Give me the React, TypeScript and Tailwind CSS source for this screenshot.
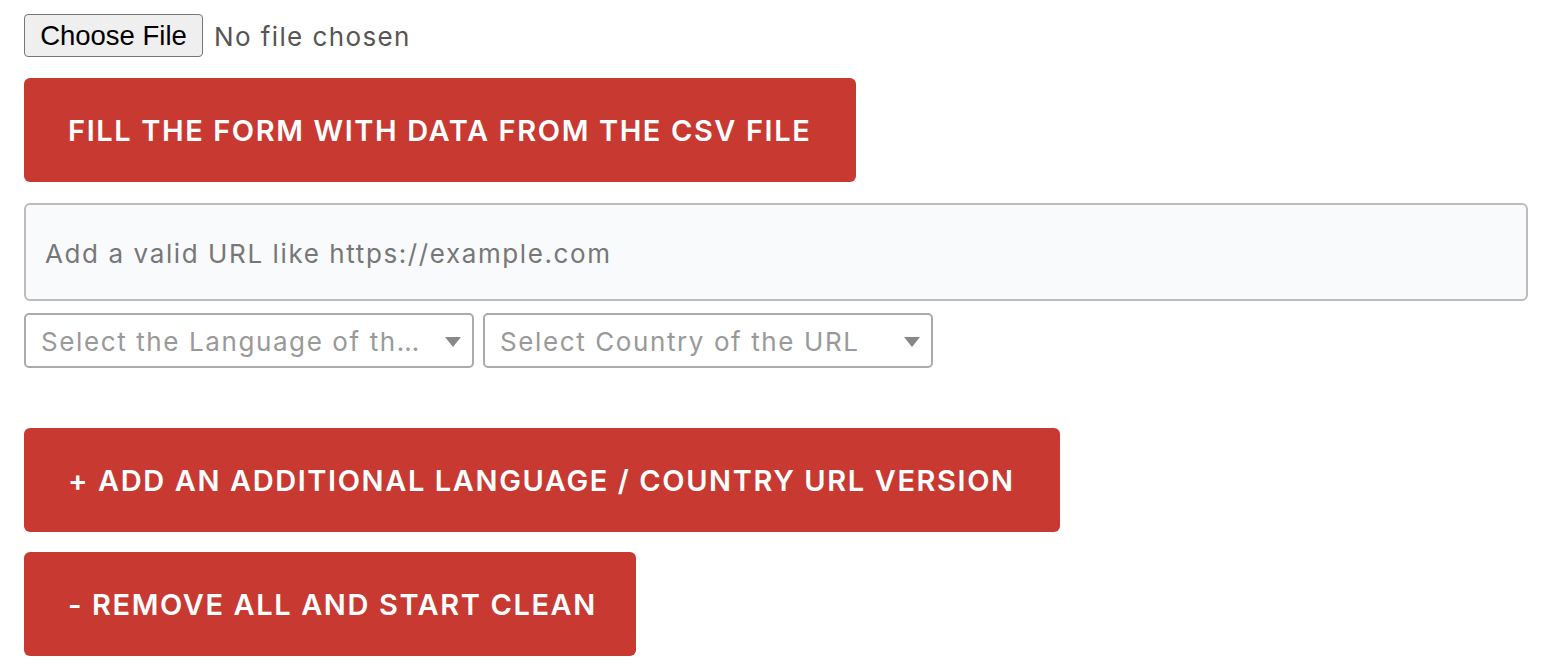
import { ChangeEvent, useState } from 'react';

const redBtn =
    'flex items-center h-[104px] pl-[44px] pr-[44px] pt-[2px] rounded-[6px] bg-[#c83932] text-white text-[29px] font-semibold tracking-[1.6px] whitespace-nowrap';

const selectBox =
    'flex items-center justify-between w-[450px] h-[55px] pl-[15px] pr-[11px] pt-[2px] border-2 border-[#ababab] rounded-[5px] text-[26px] text-[#999] tracking-[1.6px]';

function Arrow() {
    return (
        <svg width="16" height="10" viewBox="0 0 16 10" className="shrink-0 ml-[10px]">
            <path d="M0 0h16L8 10z" fill="#888" />
        </svg>
    );
}

export default function App() {
    const [url, setUrl] = useState('');

    return (
        <div className="pl-[24px] pt-[14px] font-['Inter',sans-serif] bg-white min-h-[670px]">
            <div className="flex items-center gap-[11px] h-[43px]">
                <button className="h-[43px] w-[179px] border border-[#767676] rounded-[4px] bg-[#efefef] text-[27.5px] text-black font-['Liberation_Sans',sans-serif]">
                    Choose File
                </button>
                <span className="text-[26px] text-[#555] tracking-[1.4px] pt-[2px]">No file chosen</span>
            </div>

            <button className={`${redBtn} mt-[21px] w-[832px]`}>FILL THE FORM WITH DATA FROM THE CSV FILE</button>

            <input
                value={url}
                onChange={(e: ChangeEvent<HTMLInputElement>) => setUrl(e.target.value)}
                placeholder="Add a valid URL like https://example.com"
                className="block mt-[21px] w-[1504px] h-[98px] px-[19px] pt-[2px] bg-[#f9fafc] border-2 border-[#bcbcbf] rounded-[6px] text-[26px] tracking-[1.6px] text-[#333] placeholder:text-[#777] outline-none"
            />

            <div className="flex gap-[9px] mt-[12px]">
                <div className={selectBox}>
                    <span className="whitespace-nowrap">Select the Language of th…</span>
                    <Arrow />
                </div>
                <div className={selectBox}>
                    <span className="whitespace-nowrap">Select Country of the URL</span>
                    <Arrow />
                </div>
            </div>

            <button className={`${redBtn} mt-[60px] w-[1036px]`}>+ ADD AN ADDITIONAL LANGUAGE / COUNTRY URL VERSION</button>
            <button className={`${redBtn} mt-[20px] w-[612px]`}>- REMOVE ALL AND START CLEAN</button>
        </div>
    );
}
